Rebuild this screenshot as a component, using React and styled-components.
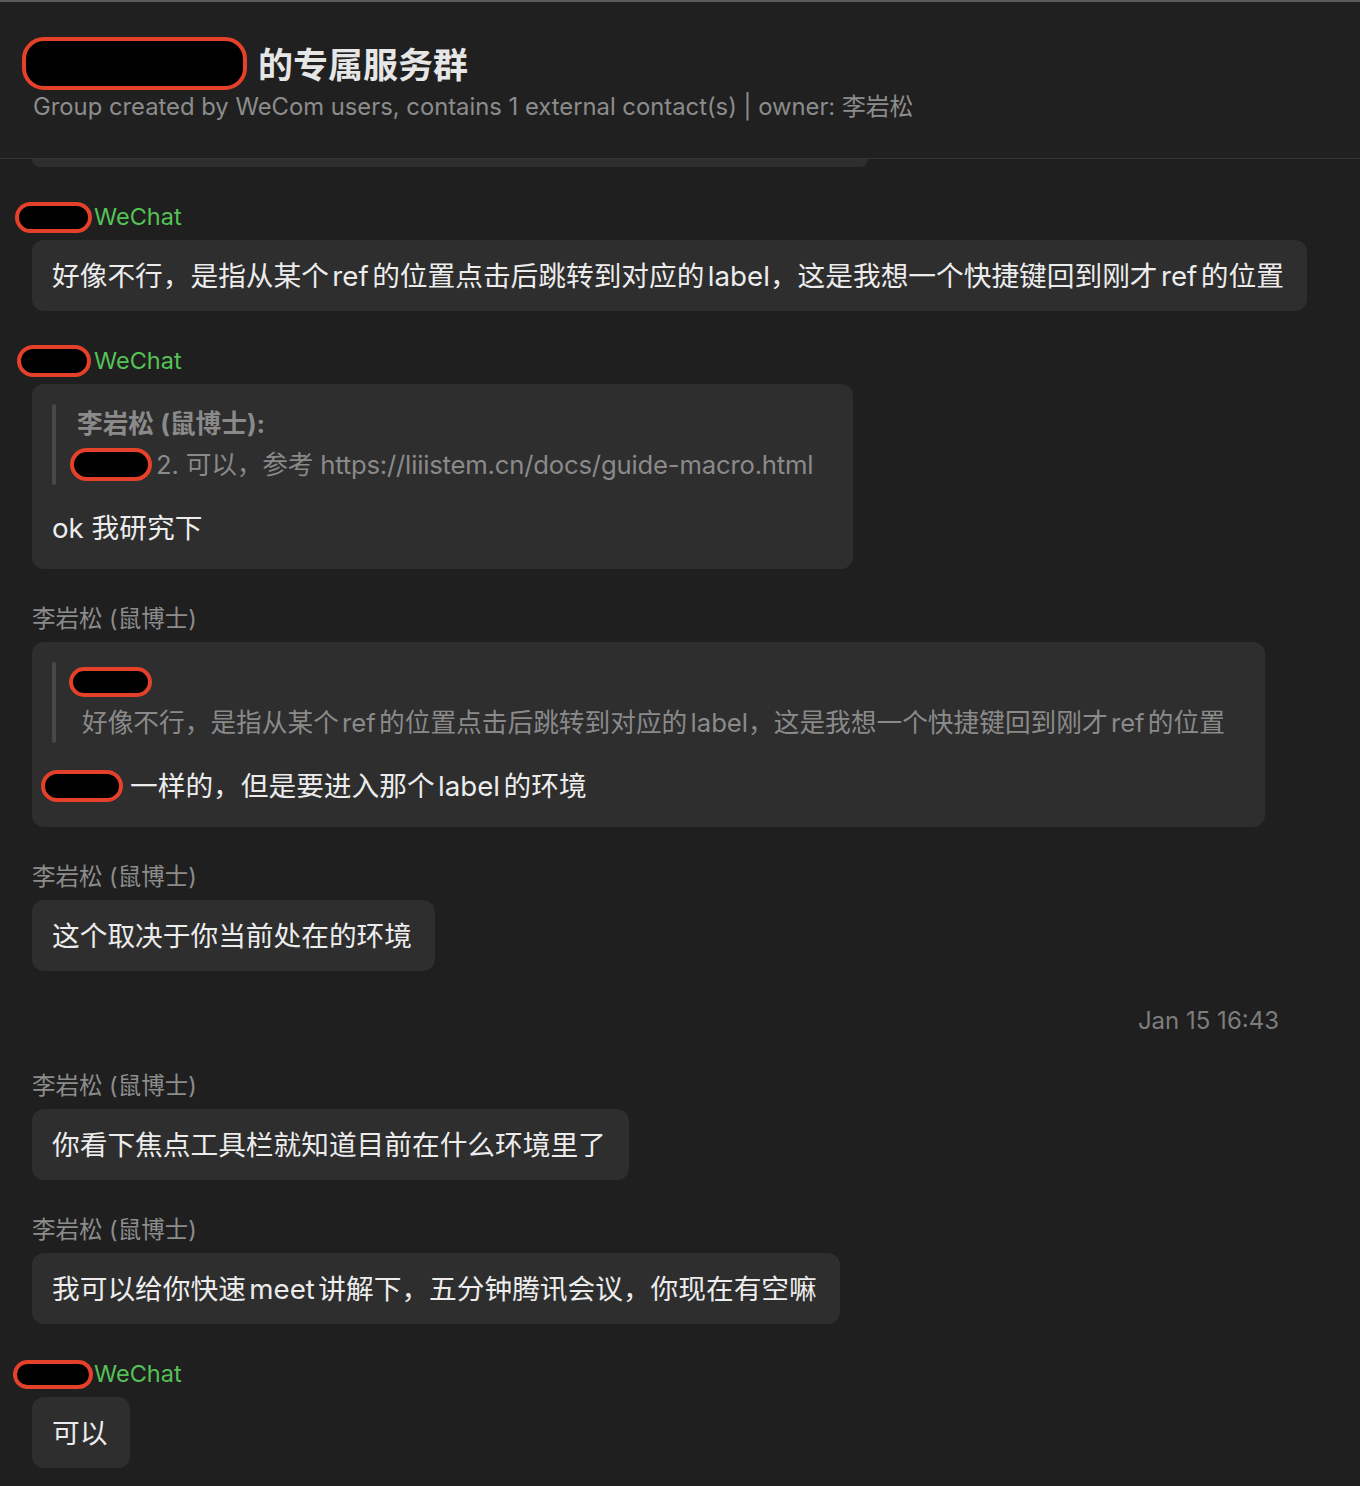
import React from 'react';
import styled, { createGlobalStyle } from 'styled-components';

const GlobalStyle = createGlobalStyle`
  html, body { margin: 0; padding: 0; background: #1f1f1f; }
  body {
    font-family: Inter, "Noto Sans CJK SC", sans-serif;
    -webkit-font-smoothing: antialiased;
  }
`;

const Page = styled.div`
  width: 1360px;
  min-height: 1486px;
  box-sizing: border-box;
  background: #1f1f1f;
  border-top: 2px solid #5a5a5a;
  overflow: hidden;
`;

const Header = styled.header`
  background: #202020;
  padding: 41px 33px 36px;
  border-bottom: 1px solid #343434;
`;

const TitleRow = styled.div`
  display: flex;
  align-items: center;
  height: 44px;
`;

const Title = styled.h1`
  margin: 0;
  font-size: 35px;
  line-height: 44px;
  font-weight: 700;
  color: #e6e6e6;
`;

const Subtitle = styled.div`
  margin-top: 5px;
  font-size: 23.8px;
  line-height: 30px;
  color: #8c8c8c;
  white-space: nowrap;
`;

const Redacted = styled.span`
  display: inline-block;
  flex: none;
  box-sizing: border-box;
  width: ${(p) => p.$w}px;
  height: ${(p) => p.$h}px;
  margin-left: ${(p) => p.$ml || 0}px;
  margin-right: ${(p) => p.$mr || 0}px;
  margin-top: ${(p) => p.$mt || 0}px;
  border: 4px solid #e5402a;
  border-radius: ${(p) => p.$r || 999}px;
  background: #000;
`;

const Feed = styled.main`
  display: flex;
  flex-direction: column;
  gap: 35px;
  padding: 0 32px;
`;

const ClippedBubble = styled.div`
  width: 836px;
  height: 8px;
  background: #2e2e2e;
  border-radius: 0 0 12px 12px;
`;

const Message = styled.section`
  display: flex;
  flex-direction: column;
  align-items: flex-start;
  gap: 8px;
`;

const SenderRow = styled.div`
  display: flex;
  align-items: center;
  height: 30px;
  font-size: 23.5px;
  line-height: 30px;
  color: #8c8c8c;
  white-space: nowrap;
`;

const Source = styled.span`
  color: #55c257;
`;

const Bubble = styled.div`
  background: #2e2e2e;
  border-radius: 12px;
  padding: ${(p) => (p.$quoted ? '20px 21px 23px 20px' : '18px 23px 17px 20px')};
  font-size: 27.7px;
  line-height: 36px;
  color: #ececec;
  white-space: nowrap;
  text-autospace: normal;
`;

const MainLine = styled.div`
  display: flex;
  align-items: center;
  height: 36px;
`;

const Quote = styled.div`
  display: flex;
  margin-bottom: 25px;
  padding-right: 19px;
`;

const QuoteBar = styled.div`
  flex: none;
  width: 4px;
  border-radius: 2px;
  background: #484848;
`;

const QuoteBody = styled.div`
  padding-left: 21px;
  font-size: 25.7px;
  color: #8a8a8a;
`;

const QuoteLine = styled.div`
  display: flex;
  align-items: center;
  height: 40.5px;
  line-height: 40.5px;
  font-weight: ${(p) => (p.$bold ? 700 : 400)};
  padding-left: ${(p) => p.$indent || 0}px;
  letter-spacing: ${(p) => (p.$tight ? '-0.2px' : 'normal')};
`;

const Timestamp = styled.div`
  align-self: flex-end;
  margin-right: 49px;
  font-size: 24px;
  line-height: 30px;
  color: #7d7d7d;
`;

const TEXT1 = '好像不行，是指从某个ref的位置点击后跳转到对应的label，这是我想一个快捷键回到刚才ref的位置';

export default function App() {
  return (
    <>
      <GlobalStyle />
      <Page>
        <Header>
          <TitleRow>
            <Redacted $w={225} $h={53} $r={22} $ml={-11} $mr={11} $mt={-4} />
            <Title>的专属服务群</Title>
          </TitleRow>
          <Subtitle>Group created by WeCom users, contains 1 external contact(s) | owner: 李岩松</Subtitle>
        </Header>
        <Feed>
          <ClippedBubble />

          <Message>
            <SenderRow>
              <Redacted $w={77} $h={31} $ml={-17} $mr={2} />
              <Source>WeChat</Source>
            </SenderRow>
            <Bubble>{TEXT1}</Bubble>
          </Message>

          <Message>
            <SenderRow>
              <Redacted $w={74} $h={32} $ml={-15} $mr={3} />
              <Source>WeChat</Source>
            </SenderRow>
            <Bubble $quoted>
              <Quote>
                <QuoteBar />
                <QuoteBody>
                  <QuoteLine $bold>李岩松 (鼠博士):</QuoteLine>
                  <QuoteLine $tight>
                    <Redacted $w={82} $h={33} $ml={-7} $mr={4} />
                    2. 可以，参考 https://liiistem.cn/docs/guide-macro.html
                  </QuoteLine>
                </QuoteBody>
              </Quote>
              <MainLine>ok 我研究下</MainLine>
            </Bubble>
          </Message>

          <Message>
            <SenderRow>李岩松 (鼠博士)</SenderRow>
            <Bubble $quoted>
              <Quote>
                <QuoteBar />
                <QuoteBody>
                  <QuoteLine>
                    <Redacted $w={83} $h={30} $ml={-8} />
                  </QuoteLine>
                  <QuoteLine $indent={5}>{TEXT1}</QuoteLine>
                </QuoteBody>
              </Quote>
              <MainLine>
                <Redacted $w={82} $h={32} $ml={-11} $mr={7} />
                一样的，但是要进入那个label的环境
              </MainLine>
            </Bubble>
          </Message>

          <Message>
            <SenderRow>李岩松 (鼠博士)</SenderRow>
            <Bubble>这个取决于你当前处在的环境</Bubble>
          </Message>

          <Timestamp>Jan 15 16:43</Timestamp>

          <Message>
            <SenderRow>李岩松 (鼠博士)</SenderRow>
            <Bubble>你看下焦点工具栏就知道目前在什么环境里了</Bubble>
          </Message>

          <Message>
            <SenderRow>李岩松 (鼠博士)</SenderRow>
            <Bubble>我可以给你快速meet讲解下，五分钟腾讯会议，你现在有空嘛</Bubble>
          </Message>

          <Message>
            <SenderRow>
              <Redacted $w={80} $h={29} $ml={-19} $mr={1} />
              <Source>WeChat</Source>
            </SenderRow>
            <Bubble>可以</Bubble>
          </Message>
        </Feed>
      </Page>
    </>
  );
}
